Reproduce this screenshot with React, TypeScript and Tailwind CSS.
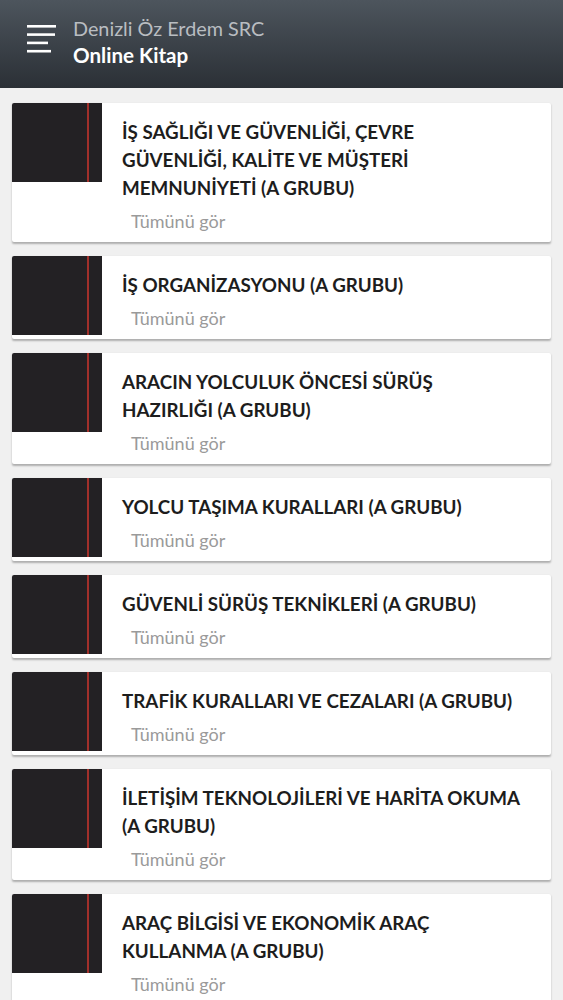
const BOOKS: string[][] = [
  ["İŞ SAĞLIĞI VE GÜVENLİĞİ, ÇEVRE", "GÜVENLİĞİ, KALİTE VE MÜŞTERİ", "MEMNUNİYETİ (A GRUBU)"],
  ["İŞ ORGANİZASYONU (A GRUBU)"],
  ["ARACIN YOLCULUK ÖNCESİ SÜRÜŞ", "HAZIRLIĞI (A GRUBU)"],
  ["YOLCU TAŞIMA KURALLARI (A GRUBU)"],
  ["GÜVENLİ SÜRÜŞ TEKNİKLERİ (A GRUBU)"],
  ["TRAFİK KURALLARI VE CEZALARI (A GRUBU)"],
  ["İLETİŞİM TEKNOLOJİLERİ VE HARİTA OKUMA", "(A GRUBU)"],
  ["ARAÇ BİLGİSİ VE EKONOMİK ARAÇ", "KULLANMA (A GRUBU)"],
];

function MenuIcon() {
  return (
    <svg width="30" height="28" viewBox="0 0 30 28" className="shrink-0">
      <rect x="0" y="0" width="29" height="2.6" fill="#fff" />
      <rect x="0" y="8.3" width="28" height="2.6" fill="#fff" />
      <rect x="0" y="16.6" width="21" height="2.6" fill="#fff" />
      <rect x="0" y="24.9" width="24" height="2.6" fill="#fff" />
    </svg>
  );
}

function BookCard({ lines }: { lines: string[] }) {
  return (
    <div className="flex rounded-[2px] bg-white shadow-[0_1.5px_2px_rgba(0,0,0,0.28)]">
      <div className="flex h-[79px] w-[90px] shrink-0 rounded-tl-[2px] bg-[#232124]">
        <div className="ml-[75px] h-full w-[2px] bg-[#a1302b]" />
      </div>
      <div className="flex min-w-0 flex-col pb-[8.5px] pl-[20px] pt-[14.5px]">
        <h2 className="text-[18.8px] font-bold leading-[28px] text-[#1d1d1d]">
          {lines.map((line) => (
            <div key={line} className="whitespace-nowrap">
              {line}
            </div>
          ))}
        </h2>
        <span className="mt-[6px] pl-[9px] text-[18px] leading-[26px] text-[#9a9a9a]">Tümünü gör</span>
      </div>
    </div>
  );
}

export default function App() {
  return (
    <div className="min-h-screen bg-[#f0f0f0] font-['Lato','Liberation_Sans',sans-serif]">
      <header className="flex h-[88px] items-start gap-[16px] bg-gradient-to-b from-[#4d555d] to-[#2b3036] pl-[27px]">
        <div className="mt-[25px]">
          <MenuIcon />
        </div>
        <div className="mt-[15px] flex flex-col">
          <span className="text-[19.8px] leading-[26px] text-[#b9bdc1]">Denizli Öz Erdem SRC</span>
          <span className="text-[20.6px] font-bold leading-[28px] text-white">Online Kitap</span>
        </div>
      </header>
      <main className="flex flex-col gap-[14px] px-[12px] pt-[15px]">
        {BOOKS.map((lines) => (
          <BookCard key={lines.join(" ")} lines={lines} />
        ))}
      </main>
    </div>
  );
}
